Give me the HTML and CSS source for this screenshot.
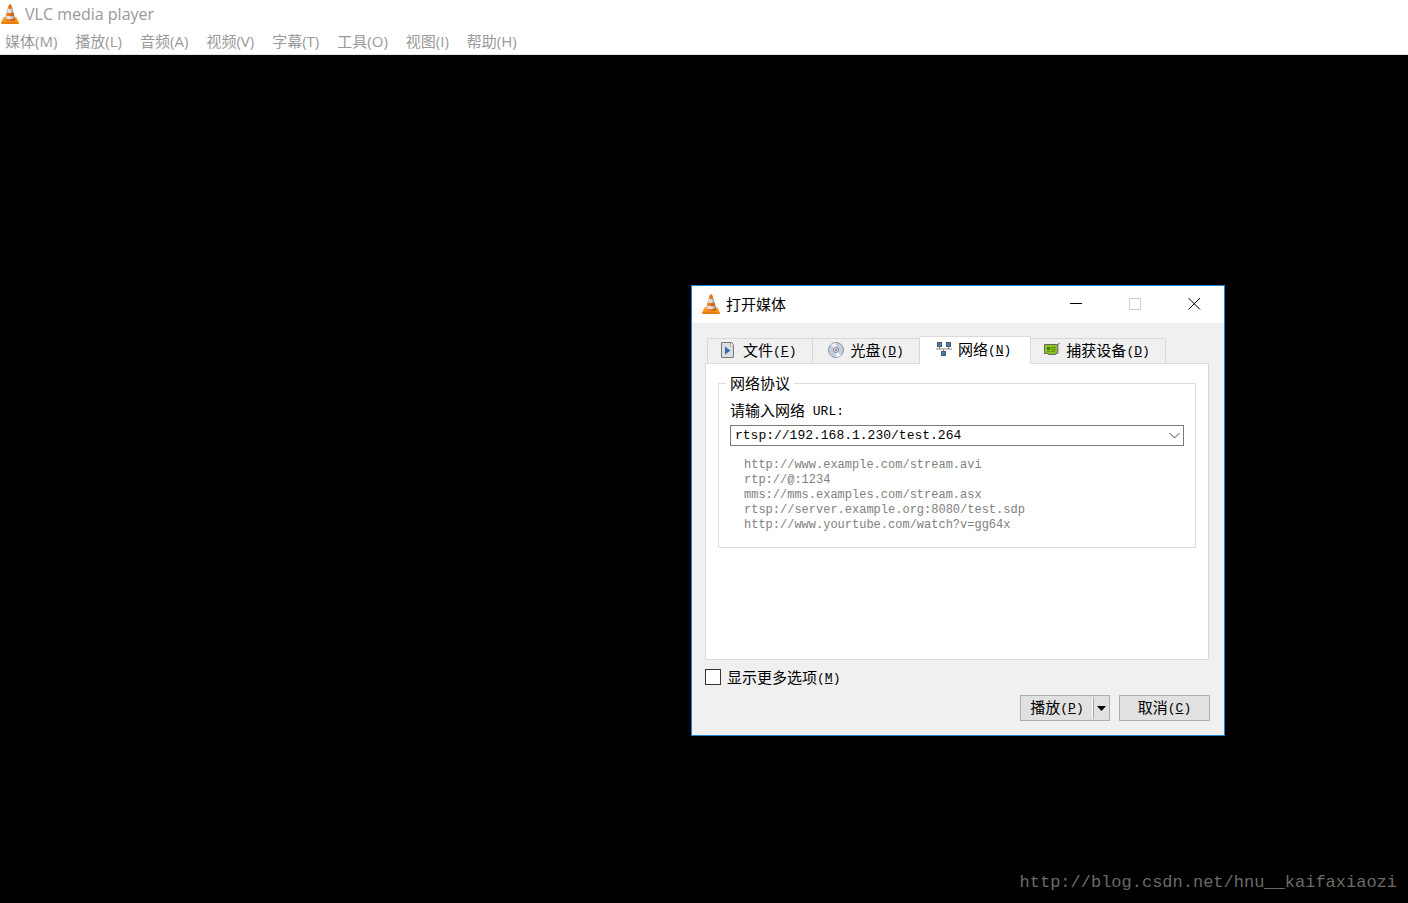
FILE: index.html
```html
<!DOCTYPE html>
<html lang="zh-CN">
<head>
  <meta charset="UTF-8">
  <meta name="viewport" content="width=device-width, initial-scale=1">
  <title>VLC media player</title>
  <link rel="stylesheet" href="styles.css">
</head>
<body>

  <!-- Shared cone logo -->
  <svg class="defs" width="0" height="0" aria-hidden="true">
    <defs>
      <linearGradient id="coneOrange" x1="0" x2="1">
        <stop offset="0" stop-color="#f09030"/>
        <stop offset=".45" stop-color="#e8761a"/>
        <stop offset="1" stop-color="#b8480a"/>
      </linearGradient>
      <linearGradient id="coneWhite" x1="0" x2="1">
        <stop offset="0" stop-color="#c5c5c5"/>
        <stop offset=".4" stop-color="#ececec"/>
        <stop offset="1" stop-color="#999"/>
      </linearGradient>
      <linearGradient id="coneBase" x1="0" x2="0" y1="0" y2="1">
        <stop offset="0" stop-color="#ffb23c"/>
        <stop offset="1" stop-color="#f08100"/>
      </linearGradient>
      <symbol id="cone" viewBox="0 0 18 20">
        <path d="M2.500 13h13l2.300 5.800q.2 1-.8 1H1q-1 0-.8-1z" fill="url(#coneBase)"/>
        <path d="M.2 18.600h17.600q.2 1.200-.8 1.200H1q-1 0-.8-1.200z" fill="#e07400"/>
        <path d="M7.800.7q1.200-.7 2.400 0l4.300 15q-1.500 1.500-5.500 1.500t-5.500-1.500z" fill="url(#coneOrange)"/>
        <path d="M6.800 4.500q2.200.8 4.400 0l1.200 4q-3.400 1-6.800 0z" fill="url(#coneWhite)"/>
        <path d="M4.800 11.500q4.200 1.300 8.400 0l.8 2.800q-5 2-10 0z" fill="url(#coneWhite)"/>
      </symbol>
    </defs>
  </svg>

  <header class="app-header">
    <div class="app-title">
      <svg class="cone"><use href="#cone"/></svg>
      <span>VLC media player</span>
    </div>
    <nav class="menu">
      <a href="#">媒体(M)</a>
      <a href="#">播放(L)</a>
      <a href="#">音频(A)</a>
      <a href="#">视频(V)</a>
      <a href="#">字幕(T)</a>
      <a href="#">工具(O)</a>
      <a href="#">视图(I)</a>
      <a href="#">帮助(H)</a>
    </nav>
  </header>

  <main class="video">

    <!-- Open media dialog -->
    <section class="dialog" role="dialog" aria-labelledby="dialogTitle">
      <div class="dialog-title">
        <svg class="cone"><use href="#cone"/></svg>
        <h1 id="dialogTitle">打开媒体</h1>
        <div class="window-buttons">
          <button type="button" aria-label="最小化">
            <svg width="13" height="13"><path d="M0 6.500h12" stroke="#000"/></svg>
          </button>
          <button type="button" aria-label="最大化" disabled>
            <svg width="13" height="13"><path d="M.5 1.500h11v11h-11z" fill="none" stroke="#ccc"/></svg>
          </button>
          <button type="button" aria-label="关闭">
            <svg width="13" height="13"><path d="M.5 1l11.500 11.500M12 1L.5 12.500" stroke="#000"/></svg>
          </button>
        </div>
      </div>

      <form class="dialog-body">
        <div class="tabs" role="tablist">
          <button type="button" class="tab" role="tab">
            <svg width="16" height="16" viewBox="0 0 16 16">
              <path d="M.5.5h10l2 2v13H.5z" fill="#dedede" stroke="#777"/>
              <path d="M9.500 1v3h3" fill="#fff" stroke="#aaa"/>
              <path d="M4 4.500v8l5.500-4z" fill="#2f6fb7"/>
            </svg>
            <span>文件<span class="key">(<u>F</u>)</span></span>
          </button>
          <button type="button" class="tab" role="tab">
            <svg width="16" height="16" viewBox="0 0 16 16">
              <circle cx="8" cy="8" r="7.500" fill="#c3cee2" stroke="#8d97a8"/>
              <path d="M8 8L3 2.500A7 7 0 0 1 8 1zM8 8l5 5.500A7 7 0 0 1 8 15z" fill="#eef2f8"/>
              <circle cx="8" cy="8" r="2.500" fill="#ddd" stroke="#8a8a8a"/>
              <circle cx="8" cy="8" r="1" fill="#888"/>
            </svg>
            <span>光盘<span class="key">(<u>D</u>)</span></span>
          </button>
          <button type="button" class="tab active" role="tab" aria-selected="true">
            <svg width="16" height="16" viewBox="0 0 16 16">
              <path d="M0 8h16M3.500 6v2M12.500 6v2M7.500 8v3" stroke="#888" stroke-width="1" fill="none"/>
              <path d="M1 1h5v5H1zM10 1h5v5h-5zM5 10h5v5H5z" fill="#555"/>
              <path d="M2 2h3v3H2zM11 2h3v3h-3zM6 11h3v3H6z" fill="#3f7fca"/>
            </svg>
            <span>网络<span class="key">(<u>N</u>)</span></span>
          </button>
          <button type="button" class="tab" role="tab">
            <svg width="16" height="16" viewBox="0 0 16 16">
              <path d="M.5 2.500h13v9h-2v1h-7v-1h-4z" fill="#8fc31f" stroke="#666"/>
              <path d="M14 11V2l2-1" stroke="#888" fill="none"/>
              <path d="M3 5h3v3H3z" fill="#47780a"/>
              <path d="M7 5.500h5M7 7.500h5M3 9.500h3M7 9.500h4" stroke="#5b8c12"/>
            </svg>
            <span>捕获设备<span class="key">(<u>D</u>)</span></span>
          </button>
        </div>

        <div class="panel" role="tabpanel">
          <fieldset>
            <legend>网络协议</legend>
            <label class="url-label" for="url">请输入网络<span class="key"> URL:</span></label>
            <div class="combo">
              <input type="text" id="url" name="url" value="rtsp://192.168.1.230/test.264" spellcheck="false">
              <button type="button" aria-label="历史记录">
                <svg width="11" height="7"><path d="M.5 1l5 5 5-5" fill="none" stroke="#444"/></svg>
              </button>
            </div>
            <ul class="examples">
              <li>http://www.example.com/stream.avi</li>
              <li>rtp://@:1234</li>
              <li>mms://mms.examples.com/stream.asx</li>
              <li>rtsp://server.example.org:8080/test.sdp</li>
              <li>http://www.yourtube.com/watch?v=gg64x</li>
            </ul>
          </fieldset>
        </div>

        <label class="more">
          <input type="checkbox" name="more">
          <span>显示更多选项<span class="key">(<u>M</u>)</span></span>
        </label>

        <div class="actions">
          <div class="split">
            <button type="button" class="play">播放<span class="key">(<u>P</u>)</span></button>
            <button type="button" class="drop" aria-label="更多播放选项">
              <svg width="9" height="5"><path d="M0 0h9L4.500 5z"/></svg>
            </button>
          </div>
          <button type="button" class="cancel">取消<span class="key">(<u>C</u>)</span></button>
        </div>
      </form>
    </section>

    <p class="watermark">http://blog.csdn.net/hnu__kaifaxiaozi</p>
  </main>

</body>
</html>
```
FILE: styles.css
```css
* {
  box-sizing: border-box;
}

body {
  margin: 0;
  min-height: 100vh;
  display: flex;
  flex-direction: column;
  background: #000;
  font-family: "Open Sans", "Noto Sans CJK SC", sans-serif;
  font-size: 15px;
}

button,
input {
  font: inherit;
  color: inherit;
  margin: 0;
  padding: 0;
}

button {
  border: none;
  background: none;
}

svg {
  display: block;
  flex: none;
}

.defs {
  position: absolute;
}

.cone {
  width: 18px;
  height: 20px;
}

/* Main window */
.app-header {
  background: #fff;
  color: #999;
  border-bottom: 1px solid #e5e5e5;
}

.app-title {
  display: flex;
  align-items: center;
  gap: 6px;
  height: 28px;
  padding-left: 1px;
  font-size: 16px;
}

.menu {
  display: flex;
  gap: 18px;
  height: 26px;
  padding-left: 5px;
  line-height: 26px;
}

.menu a {
  color: inherit;
  text-decoration: none;
}

.video {
  position: relative;
  flex: 1;
  display: flex;
  flex-direction: column;
  justify-content: flex-end;
  background: #000;
}

.watermark {
  margin: 0;
  padding: 0 11px 8px;
  text-align: right;
  font-family: "Liberation Mono", monospace;
  font-size: 17px;
  line-height: 24px;
  color: #6b6b67;
}

/* Dialog */
.dialog {
  position: absolute;
  top: 230px;
  left: 691px;
  width: 534px;
  background: #f0f0f0;
  border: 1px solid #1883d7;
  color: #000;
}

.dialog-title {
  display: flex;
  align-items: center;
  height: 37px;
  padding: 0 0 2px 10px;
  background: #fff;
}

.dialog-title h1 {
  margin: 0 auto 0 6px;
  font-size: 15px;
  font-weight: normal;
  line-height: 20px;
}

.window-buttons {
  display: flex;
}

.window-buttons button {
  display: flex;
  align-items: center;
  justify-content: center;
  width: 59px;
  height: 35px;
}

.dialog-body {
  padding: 13px 14px 14px 13px;
  line-height: 20px;
}

.key {
  font-family: "Liberation Mono", monospace;
  font-size: 13px;
  line-height: 1;
  vertical-align: 1px;
  white-space: pre;
}

.tabs {
  display: flex;
  align-items: flex-end;
  padding-left: 2px;
}

.tab {
  display: flex;
  align-items: center;
  gap: 6px;
  height: 25px;
  padding: 0 16px 2px 13px;
  background: #f0f0f0;
  border: 1px solid #d9d9d9;
  border-bottom: none;
}

.tab + .tab {
  padding-left: 15px;
  padding-right: 15px;
  border-left: none;
}

.tab.active {
  position: relative;
  height: 28px;
  margin-bottom: -1px;
  padding-bottom: 4px;
  background: #fff;
}

.tab + .tab.active {
  padding-left: 16px;
  padding-right: 19px;
}

.tab.active + .tab {
  padding-left: 13px;
}

.panel {
  min-height: 297px;
  margin-right: 1px;
  padding: 9px 12px;
  background: #fff;
  border: 1px solid #d9d9d9;
}

fieldset {
  margin: 0;
  padding: 7px 11px 14px;
  border: 1px solid #dcdcdc;
}

legend {
  margin-left: -4px;
  padding: 0 4px;
}

.url-label {
  display: block;
}

.combo {
  display: flex;
  height: 21px;
  margin-top: 5px;
  border: 1px solid #7a7a7a;
}

.combo input {
  flex: 1;
  min-width: 0;
  padding-left: 4px;
  border: none;
  outline: none;
  background: none;
  font-family: "Liberation Mono", monospace;
  font-size: 13px;
}

.combo button {
  display: flex;
  align-items: center;
  justify-content: center;
  width: 17px;
}

.examples {
  margin: 12px 0 0;
  padding: 0 0 0 14px;
  list-style: none;
  font-family: "Liberation Mono", monospace;
  font-size: 12px;
  line-height: 15px;
  color: #808080;
}

.more {
  display: flex;
  align-items: center;
  gap: 6px;
  width: max-content;
  margin-top: 7px;
}

.more input {
  appearance: none;
  width: 16px;
  height: 16px;
  background: #fff;
  border: 1px solid #333;
}

.more input:checked {
  background: #333;
  box-shadow: inset 0 0 0 3px #fff;
}

.actions {
  display: flex;
  justify-content: flex-end;
  gap: 9px;
  margin-top: 8px;
}

.split,
.cancel {
  height: 26px;
  background: #e1e1e1;
  border: 1px solid #adadad;
}

.split {
  display: flex;
  width: 90px;
}

.play {
  flex: 1;
}

.play,
.cancel {
  padding-bottom: 2px;
}

.drop {
  display: flex;
  align-items: center;
  justify-content: center;
  width: 16px;
  margin: 1px 0;
  border-left: 1px solid #a0a0a0;
  box-shadow: -1px 0 #fff;
}

.cancel {
  width: 91px;
}
```
